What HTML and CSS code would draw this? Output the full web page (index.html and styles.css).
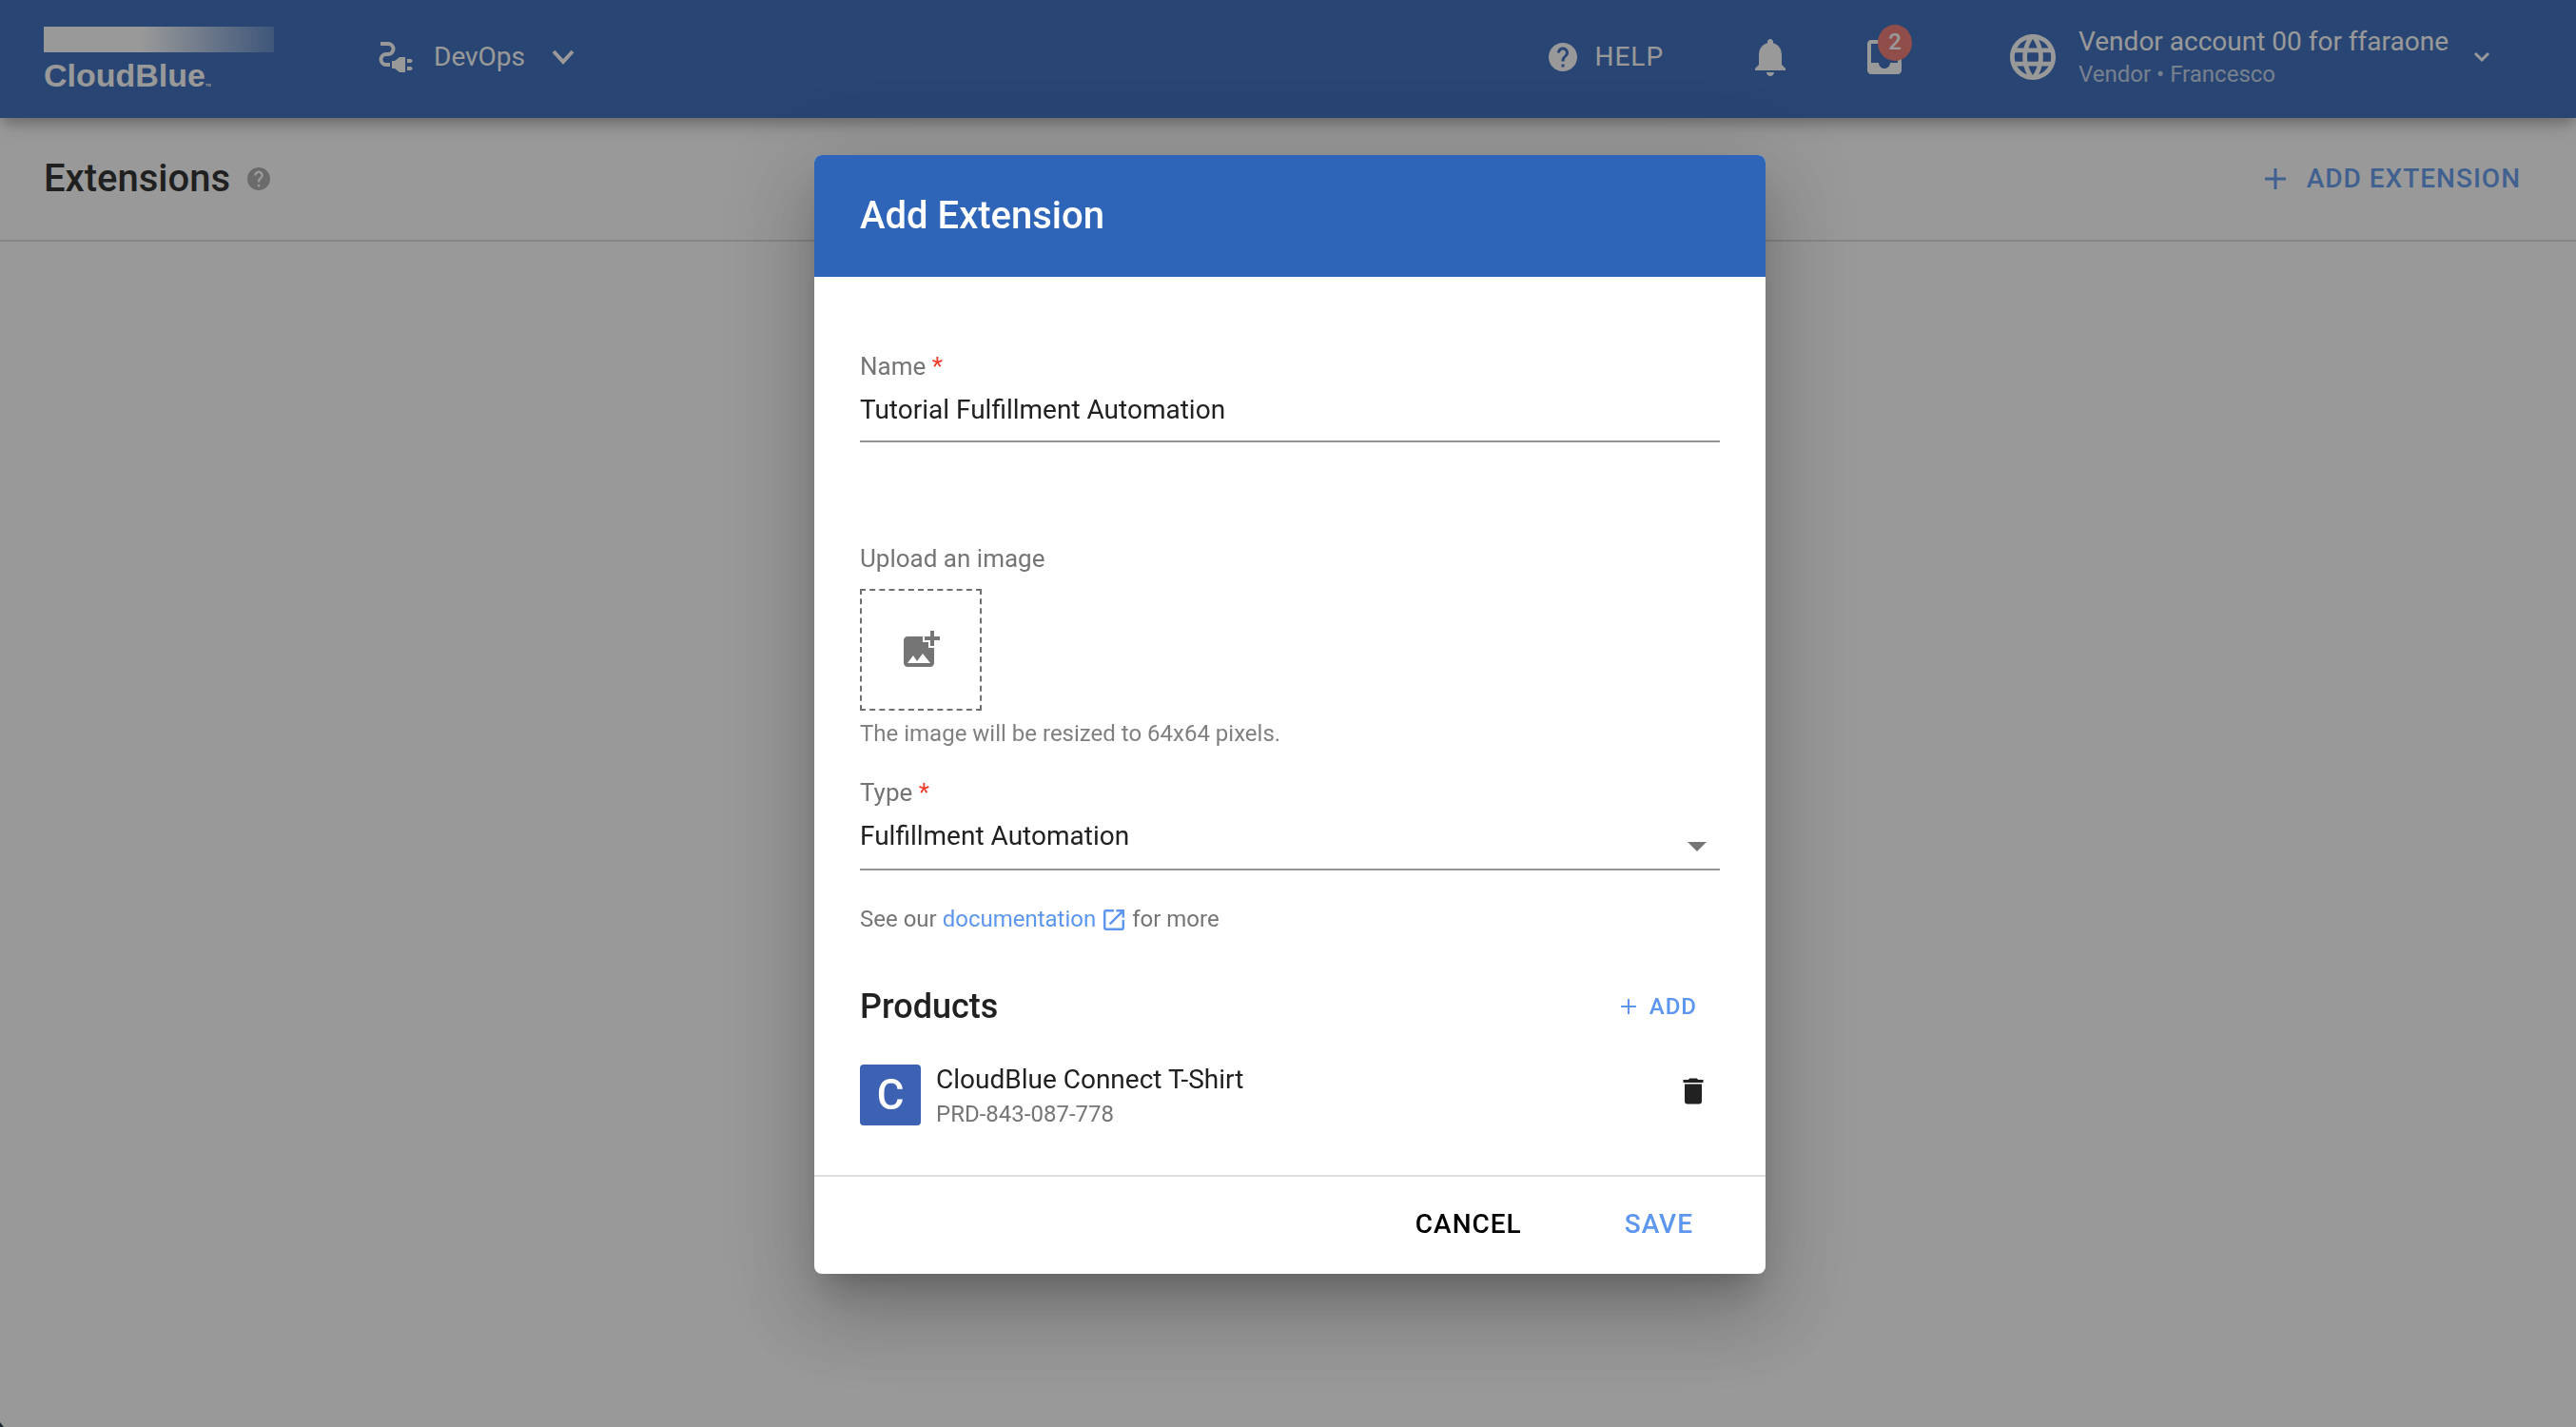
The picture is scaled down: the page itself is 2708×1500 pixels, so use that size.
FILE: index.html
```html
<!DOCTYPE html>
<html lang="en">
<head>
<meta charset="utf-8">
<meta name="viewport" content="width=device-width, initial-scale=1">
<title>Extensions</title>
<link rel="stylesheet" href="styles.css">
</head>
<body>
<header class="topbar">
  <a class="logo" href="#">
    <span class="logo-bar"></span>
    <span class="logo-name">CloudBlue<span class="logo-mark">TM</span></span>
  </a>
  <button class="module" type="button">
    <svg class="icon-plug" viewBox="0 0 36 32" aria-hidden="true"><path d="M2 2h8a5.500 5.500 0 0 1 0 11h-2a5.500 5.500 0 0 0 0 11h4" fill="none" stroke="currentColor" stroke-width="4"/><path d="M14 20h3l5-4h6v16h-6l-5-4h-3zM30 18h4l2 2-2 2h-4zM30 26h4l2 2-2 2h-4z" fill="currentColor"/></svg>
    <span>DevOps</span>
    <svg class="icon-chevron" viewBox="0 0 24 16" aria-hidden="true"><path d="M2 2l10 11L22 2" fill="none" stroke="currentColor" stroke-width="4"/></svg>
  </button>
  <nav class="tools">
    <button class="help" type="button">
      <svg class="icon-help" viewBox="2 2 20 20" aria-hidden="true"><path fill="currentColor" d="M12 2C6.480 2 2 6.480 2 12s4.480 10 10 10 10-4.480 10-10S17.520 2 12 2zm1 17h-2v-2h2v2zm2.070-7.750l-.9.920C13.450 12.900 13 13.500 13 15h-2v-.5c0-1.100.45-2.100 1.170-2.830l1.240-1.260c.37-.36.590-.86.590-1.410 0-1.100-.9-2-2-2s-2 .9-2 2H8c0-2.210 1.790-4 4-4s4 1.790 4 4c0 .880-.36 1.680-.93 2.250z"/></svg>
      <span>HELP</span>
    </button>
    <button class="bell" type="button" aria-label="Notifications">
      <svg class="icon-bell" viewBox="4 2 16 20" preserveAspectRatio="none" aria-hidden="true"><path fill="currentColor" d="M12 22c1.100 0 2-.9 2-2h-4c0 1.100.9 2 2 2zm6-6v-5c0-3.070-1.630-5.640-4.500-6.320V4c0-.83-.67-1.500-1.500-1.500s-1.500.67-1.500 1.500v.680C7.640 5.360 6 7.920 6 11v5l-2 2v1h16v-1l-2-2z"/></svg>
    </button>
    <button class="inbox" type="button" aria-label="Inbox, 2 new">
      <svg class="icon-inbox" viewBox="3 3 18 18" aria-hidden="true"><path fill="currentColor" d="M19 3H5c-1.100 0-2 .9-2 2v14c0 1.100.9 2 2 2h14c1.100 0 2-.9 2-2V5c0-1.100-.9-2-2-2zm0 12h-4c0 1.660-1.350 3-3 3s-3-1.340-3-3H5V5h14v10z"/></svg>
      <span class="badge">2</span>
    </button>
    <button class="account" type="button">
      <svg class="icon-globe" viewBox="2 2 20 20" aria-hidden="true"><path fill="currentColor" d="M11.990 2C6.470 2 2 6.480 2 12s4.470 10 9.990 10C17.520 22 22 17.520 22 12S17.520 2 11.990 2zm6.930 6h-2.950a15.650 15.650 0 0 0-1.380-3.560A8.030 8.030 0 0 1 18.920 8zM12 4.040c.83 1.200 1.480 2.530 1.910 3.960h-3.820c.43-1.430 1.080-2.760 1.910-3.960zM4.260 14C4.100 13.360 4 12.690 4 12s.1-1.360.26-2h3.380c-.08.660-.14 1.320-.14 2s.06 1.340.14 2H4.260zm.82 2h2.950c.32 1.250.78 2.450 1.380 3.560A7.987 7.987 0 0 1 5.080 16zm2.950-8H5.080a7.987 7.987 0 0 1 4.330-3.560A15.650 15.650 0 0 0 8.030 8zM12 19.960c-.83-1.200-1.480-2.530-1.910-3.960h3.820c-.43 1.430-1.080 2.760-1.910 3.960zM14.340 14H9.660c-.09-.66-.16-1.320-.16-2s.07-1.350.16-2h4.680c.09.650.16 1.320.16 2s-.07 1.340-.16 2zm.25 5.560c.6-1.110 1.060-2.310 1.380-3.560h2.950a8.030 8.030 0 0 1-4.330 3.560zM16.360 14c.08-.66.14-1.320.14-2s-.06-1.340-.14-2h3.380c.16.640.26 1.310.26 2s-.1 1.360-.26 2h-3.380z"/></svg>
      <span class="account-text">
        <span>Vendor account 00 for ffaraone</span>
        <span class="account-role">Vendor • Francesco</span>
      </span>
      <svg class="icon-caret" viewBox="0 0 18 12" aria-hidden="true"><path d="M2 2l7 7 7-7" fill="none" stroke="currentColor" stroke-width="3"/></svg>
    </button>
  </nav>
</header>
<main>
  <div class="page-head">
    <h1 class="page-title">Extensions</h1>
    <button class="hint" type="button" aria-label="About extensions">
      <svg class="icon-hint" viewBox="2 2 20 20" aria-hidden="true"><path fill="currentColor" d="M12 2C6.480 2 2 6.480 2 12s4.480 10 10 10 10-4.480 10-10S17.520 2 12 2zm1 17h-2v-2h2v2zm2.070-7.750l-.9.920C13.450 12.900 13 13.500 13 15h-2v-.5c0-1.100.45-2.100 1.170-2.830l1.240-1.260c.37-.36.590-.86.590-1.410 0-1.100-.9-2-2-2s-2 .9-2 2H8c0-2.210 1.790-4 4-4s4 1.790 4 4c0 .880-.36 1.680-.93 2.250z"/></svg>
    </button>
    <button class="add-extension" type="button">
      <svg class="icon-plus" viewBox="0 0 22 22" aria-hidden="true"><path d="M11 0v22M0 11h22" stroke="currentColor" stroke-width="3"/></svg>
      <span>ADD EXTENSION</span>
    </button>
  </div>
</main>
<div class="overlay">
  <form class="dialog" role="dialog" aria-modal="true" aria-labelledby="dialog-title">
    <h2 class="dialog-title" id="dialog-title">Add Extension</h2>
    <div class="dialog-body">
      <label class="label" for="name">Name <span class="required">*</span></label>
      <input class="control" id="name" type="text" value="Tutorial Fulfillment Automation">
      <div class="upload">
        <span class="label" id="upload-label">Upload an image</span>
        <button class="dropzone" type="button" aria-labelledby="upload-label">
          <svg class="icon-image" viewBox="0 0 24 24" aria-hidden="true"><path fill="currentColor" d="M19 7v2.990s-1.990.01-2 0V7h-3s.01-1.990 0-2h3V2h2v3h3v2h-3zm-3 4V8h-3V5H5c-1.100 0-2 .9-2 2v12c0 1.100.9 2 2 2h12c1.100 0 2-.9 2-2v-8h-3zM5 19l3-4 2 3 3-4 4 5H5z"/></svg>
        </button>
        <p class="note">The image will be resized to 64x64 pixels.</p>
      </div>
      <label class="label" for="type">Type <span class="required">*</span></label>
      <div class="select-wrap">
        <select class="control" id="type"><option>Fulfillment Automation</option></select>
        <svg class="icon-arrow" viewBox="0 0 20 10" aria-hidden="true"><path fill="currentColor" d="M0 0h20L10 10z"/></svg>
      </div>
      <p class="docs">See our <a class="docs-link" href="#">documentation <svg class="icon-open" viewBox="3 3 18 18" aria-hidden="true"><path fill="currentColor" d="M19 19H5V5h7V3H5a2 2 0 0 0-2 2v14a2 2 0 0 0 2 2h14c1.100 0 2-.9 2-2v-7h-2v7zM14 3v2h3.590l-9.830 9.830 1.410 1.410L19 6.410V10h2V3h-7z"/></svg></a> for more</p>
      <div class="products-head">
        <h3 class="products-title">Products</h3>
        <button class="add-product" type="button">
          <svg class="icon-plus-small" viewBox="0 0 16 16" aria-hidden="true"><path d="M8 0v16M0 8h16" stroke="currentColor" stroke-width="2"/></svg>
          <span>ADD</span>
        </button>
      </div>
      <div class="product">
        <span class="product-tile">C</span>
        <div class="product-text">
          <div class="product-name">CloudBlue Connect T-Shirt</div>
          <div class="product-id">PRD-843-087-778</div>
        </div>
        <button class="remove" type="button" aria-label="Remove product">
          <svg class="icon-trash" viewBox="0 0 24 24" aria-hidden="true"><path fill="currentColor" d="M19 4h-3.500l-1-1h-5l-1 1H5v2h14M6 19a2 2 0 0 0 2 2h8a2 2 0 0 0 2-2V7H6v12z"/></svg>
        </button>
      </div>
    </div>
    <div class="dialog-actions">
      <button class="action" type="button">CANCEL</button>
      <button class="action action-primary" type="submit">SAVE</button>
    </div>
  </form>
</div>
</body>
</html>
```

FILE: styles.css
```css
:root {
  --brand: #2f65b9;
  --accent: #5c96ee;
  --text: #212121;
  --muted: #757575;
}

* { box-sizing: border-box; }

body {
  margin: 0;
  min-height: 100vh;
  background: #fff;
  color: var(--text);
  font-family: Roboto, "Liberation Sans", sans-serif;
  font-size: 28px;
  line-height: 36px;
}

h1, h2, h3, p { margin: 0; }

button {
  display: flex;
  align-items: center;
  padding: 0;
  border: 0;
  background: none;
  color: inherit;
  font: inherit;
  cursor: pointer;
}

svg { display: block; flex: none; }

/* Top bar */
.topbar {
  position: relative;
  display: flex;
  align-items: center;
  height: 124px;
  padding: 0 90px 0 46px;
  background: var(--brand);
  color: #fff;
  box-shadow: 0 8px 10px -2px rgba(0, 0, 0, .2), 0 12px 22px -4px rgba(0, 0, 0, .16);
}

.logo {
  display: flex;
  flex-direction: column;
  gap: 6px;
  width: 242px;
  margin-right: 110px;
  color: #fff;
  text-decoration: none;
}

.logo-bar {
  height: 27px;
  background: linear-gradient(90deg, #fff 42%, rgba(255, 255, 255, .2));
}

.logo-name {
  font: bold 34px/36px "Liberation Sans", Arial, sans-serif;
}

.logo-mark { font-size: 4px; line-height: 4px; }

.module { gap: 22px; padding-bottom: 4px; }
.icon-plug { width: 36px; height: 32px; }
.icon-chevron { width: 24px; height: 16px; margin-left: 6px; }

.tools {
  display: flex;
  align-items: center;
  margin-left: auto;
  padding-bottom: 4px;
}

.help { gap: 18px; letter-spacing: 1px; }
.icon-help { width: 30px; height: 30px; }

.bell { margin-left: 96px; }
.icon-bell { width: 32px; height: 40px; }

.inbox { position: relative; margin-left: 86px; }
.icon-inbox { width: 36px; height: 36px; }

.badge {
  position: absolute;
  top: -16px;
  left: 11px;
  width: 36px;
  height: 38px;
  border-radius: 50%;
  background: #f0736d;
  font-size: 24px;
  font-weight: 500;
  text-align: center;
}

.account { margin-left: 114px; text-align: left; }
.icon-globe { width: 48px; height: 48px; margin-right: 24px; }
.account-text { display: flex; flex-direction: column; }
.account-role { font-size: 24px; line-height: 32px; opacity: .7; }
.icon-caret { width: 18px; height: 12px; margin-left: 26px; }

/* Page heading */
.page-head {
  display: flex;
  align-items: center;
  height: 130px;
  padding: 0 58px 0 46px;
  border-bottom: 2px solid #dcdcdc;
}

.page-title { font-size: 40px; font-weight: 500; line-height: 48px; }
.hint { margin-left: 18px; color: #aaa; }
.icon-hint { width: 24px; height: 24px; }

.add-extension {
  gap: 22px;
  margin-left: auto;
  color: var(--accent);
  font-weight: 500;
  letter-spacing: 1px;
}

.icon-plus { width: 22px; height: 22px; }

/* Dialog */
.overlay {
  position: fixed;
  inset: 0;
  display: flex;
  align-items: center;
  justify-content: center;
  padding: 2px 0 0 4px;
  background: rgba(33, 33, 33, .46);
}

/* Dark rounded corner of the window */
.overlay::before {
  content: "";
  position: absolute;
  bottom: 0;
  left: 0;
  width: 4px;
  height: 5px;
  background: #1d2a36;
  clip-path: polygon(0 0, 100% 100%, 0 100%);
}

.dialog {
  width: 1000px;
  max-width: 100%;
  overflow: hidden;
  border-radius: 8px;
  background: #fff;
  box-shadow: 0 22px 30px -14px rgba(0, 0, 0, .2), 0 48px 76px 6px rgba(0, 0, 0, .14), 0 18px 92px 16px rgba(0, 0, 0, .12);
}

.dialog-title {
  padding: 40px 48px;
  background: var(--brand);
  color: #fff;
  font-size: 40px;
  font-weight: 500;
  line-height: 48px;
}

.dialog-body { padding: 78px 48px 44px; }

.label {
  display: block;
  color: var(--muted);
  font-size: 26px;
  line-height: 32px;
}

.required { color: #f03a2a; }

.control {
  display: block;
  width: 100%;
  height: 64px;
  padding: 0 0 4px;
  border: 0;
  border-bottom: 2px solid #949494;
  border-radius: 0;
  outline: 0;
  background: none;
  color: var(--text);
  font: inherit;
  appearance: none;
}

.upload { margin: 106px 0 30px; }

.dropzone {
  justify-content: center;
  width: 128px;
  height: 128px;
  margin: 16px 0 8px;
  border: 2px dashed #707070;
  color: var(--muted);
}

.icon-image { width: 48px; height: 48px; }

.note {
  color: #808080;
  font-size: 24px;
  line-height: 32px;
}

.select-wrap { position: relative; }
.select-wrap .control { height: 66px; }

.icon-arrow {
  position: absolute;
  right: 14px;
  bottom: 20px;
  width: 20px;
  height: 10px;
  color: var(--muted);
  pointer-events: none;
}

.docs {
  margin-top: 35px;
  color: var(--muted);
  font-size: 24px;
  line-height: 32px;
}

.docs-link { color: var(--accent); text-decoration: none; }

.icon-open {
  display: inline-block;
  width: 22px;
  height: 22px;
  margin: 0 2px;
  vertical-align: -4px;
}

.products-head {
  display: flex;
  align-items: center;
  justify-content: space-between;
  margin-top: 52px;
  padding-right: 24px;
}

.products-title { font-size: 36px; font-weight: 500; line-height: 48px; }

.add-product {
  gap: 14px;
  color: var(--accent);
  font-size: 24px;
  font-weight: 500;
  letter-spacing: 1px;
}

.icon-plus-small { width: 16px; height: 16px; }

.product {
  display: flex;
  align-items: flex-start;
  margin-top: 37px;
}

.product-tile {
  width: 64px;
  height: 64px;
  margin-right: 16px;
  border-radius: 4px;
  background: #3e62b3;
  color: #fff;
  font-size: 44px;
  font-weight: 500;
  line-height: 64px;
  text-align: center;
}

.product-text { flex: 1; }
.product-name { line-height: 32px; }
.product-id { color: var(--muted); font-size: 24px; line-height: 40px; }

.remove { margin: 10px 10px 0 0; }
.icon-trash { width: 36px; height: 36px; }

.dialog-actions {
  display: flex;
  justify-content: flex-end;
  gap: 108px;
  padding: 32px 76px 34px;
  border-top: 2px solid #e0e0e0;
}

.action {
  color: #000;
  font-weight: 500;
  letter-spacing: 1px;
}

.action-primary { color: var(--accent); }
```
